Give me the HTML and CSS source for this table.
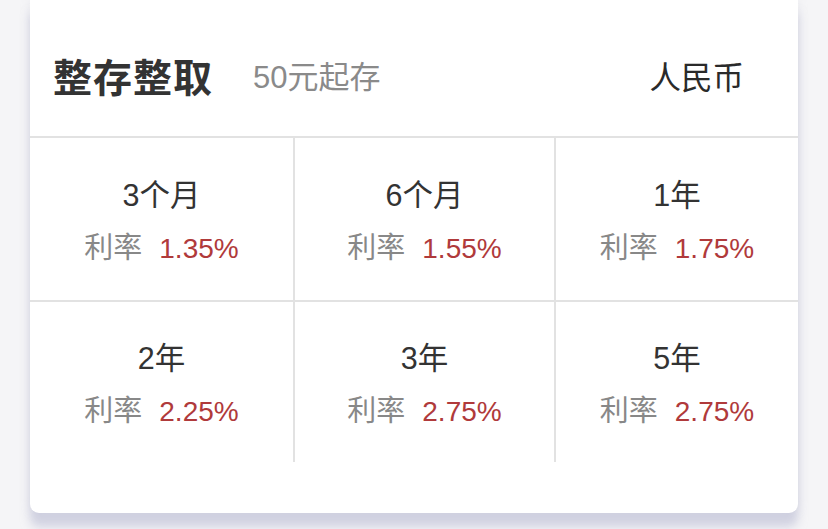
FILE: index.html
```html
<!DOCTYPE html>
<html lang="zh">
<head>
<meta charset="utf-8">
<title>整存整取</title>
<link rel="stylesheet" href="styles.css">
</head>
<body>
<div class="card">
  <div class="header">
    <div class="title-group">
      <span class="title">整存整取</span>
      <span class="subtitle">50元起存</span>
    </div>
    <span class="currency">人民币</span>
  </div>
  <div class="grid">
    <div class="cell"><div class="period">3个月</div><div class="rate"><span class="label">利率</span><span class="value">1.35%</span></div></div>
    <div class="cell"><div class="period">6个月</div><div class="rate"><span class="label">利率</span><span class="value">1.55%</span></div></div>
    <div class="cell"><div class="period">1年</div><div class="rate"><span class="label">利率</span><span class="value">1.75%</span></div></div>
    <div class="cell bottom"><div class="period">2年</div><div class="rate"><span class="label">利率</span><span class="value">2.25%</span></div></div>
    <div class="cell bottom"><div class="period">3年</div><div class="rate"><span class="label">利率</span><span class="value">2.75%</span></div></div>
    <div class="cell bottom"><div class="period">5年</div><div class="rate"><span class="label">利率</span><span class="value">2.75%</span></div></div>
  </div>
</div>
</body>
</html>
```
FILE: styles.css
```css
html, body {
  margin: 0;
  padding: 0;
}
body {
  width: 828px;
  height: 529px;
  overflow: hidden;
  background: #f5f5f7;
  font-family: "Liberation Sans", "Noto Sans CJK SC", sans-serif;
}
.card {
  margin: 0 30px;
  height: 513px;
  background: #fff;
  border-radius: 0 0 9px 9px;
  box-shadow: 0 14px 10px rgba(175, 177, 205, 0.5), 0 0 10px rgba(200, 200, 215, 0.25);
  box-sizing: border-box;
}
.header {
  height: 138px;
  box-sizing: border-box;
  border-bottom: 2px solid #e2e2e2;
  padding: 50px 54px 0 23px;
  display: flex;
  justify-content: space-between;
  align-items: flex-start;
}
.title-group {
  display: flex;
  align-items: center;
  height: 50px;
}
.title {
  font-family: "Noto Sans CJK SC", sans-serif;
  font-size: 39px;
  font-weight: 700;
  color: #333;
  line-height: 50px;
  letter-spacing: 1px;
}
.subtitle {
  font-size: 31px;
  color: #8a8a8a;
  margin-left: 40px;
  margin-top: 6px;
  line-height: 50px;
}
.currency {
  font-size: 31.5px;
  color: #2a2a2a;
  line-height: 50px;
  margin-top: 3px;
}
.grid {
  display: grid;
  grid-template-columns: 265px 261px 1fr;
  grid-template-rows: 164px 160px;
}
.cell {
  box-sizing: border-box;
  border-right: 2px solid #e2e2e2;
  border-bottom: 2px solid #e2e2e2;
  display: flex;
  flex-direction: column;
  align-items: center;
  padding-top: 37px;
}
.cell:nth-child(3n) {
  border-right: none;
}
.cell.bottom {
  border-bottom: none;
  padding-top: 36px;
}
.period {
  font-size: 30.5px;
  line-height: 40px;
  color: #333;
}
.rate {
  margin-top: 13px;
  line-height: 40px;
  font-size: 28px;
  display: flex;
  align-items: baseline;
  gap: 17px;
}
.label {
  color: #888;
  font-size: 29px;
}
.value {
  color: #b03a3b;
}
```
